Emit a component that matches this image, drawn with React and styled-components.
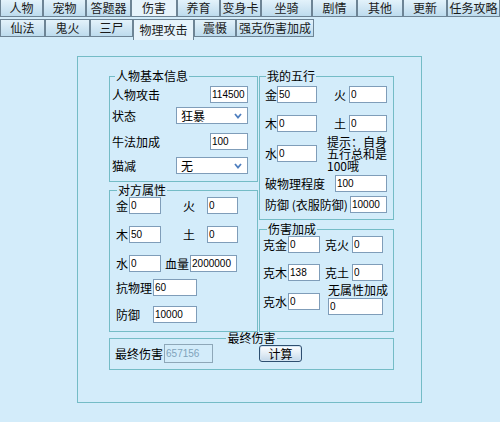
import React from 'react';
import styled, { createGlobalStyle } from 'styled-components';

const BG = '#d3ecfa';
const LINE = '#74bcc6';

const GlobalStyle = createGlobalStyle`
  html, body {
    margin: 0;
    padding: 0;
    background: ${BG};
  }
  body {
    font-family: "Noto Sans CJK SC", "Noto Sans", sans-serif;
    font-size: 12px;
    color: #000;
  }
`;

const Page = styled.div`
  width: 500px;
  height: 422px;
  overflow: hidden;
  background: ${BG};
`;

const TabRow = styled.div`
  display: flex;
  align-items: flex-start;
  height: ${({ $h }) => $h}px;
  margin-top: ${({ $mt }) => $mt || 0}px;
`;

const Tab = styled.div`
  box-sizing: border-box;
  flex-shrink: 0;
  width: ${({ $w }) => $w}px;
  height: ${({ $h, $active, $lift }) => $h + ($active && $lift ? 3 : 0)}px;
  border: 1px solid #6d8495;
  border-top: ${({ $flat }) => ($flat ? 'none' : '1px solid #6d8495')};
  border-bottom: ${({ $active, $lift }) => ($active && $lift ? 'none' : '1px solid #6d8495')};
  background: ${({ $active }) => ($active ? '#e6f3fb' : 'linear-gradient(#e3f2fb, #bddbed)')};
  display: flex;
  align-items: center;
  justify-content: center;
  font-size: 12px;
  line-height: 14px;
  white-space: nowrap;
  overflow: hidden;
  color: #1a1a1a;
`;

const Panel = styled.div`
  box-sizing: border-box;
  width: 345px;
  height: 347px;
  margin: 19px 0 0 77px;
  border: 1px solid ${LINE};
  padding: 19px 0 0 31px;
`;

const Columns = styled.div`
  display: grid;
  grid-template-columns: 149px 135px;
  column-gap: 1px;
`;

const Column = styled.div`
  display: flex;
  flex-direction: column;
  gap: ${({ $gap }) => $gap}px;
`;

const Group = styled.div`
  box-sizing: border-box;
  width: ${({ $w }) => ($w ? `${$w}px` : 'auto')};
  height: ${({ $h }) => $h}px;
  margin-top: ${({ $mt }) => $mt || 0}px;
  border: 1px solid ${LINE};
`;

const Caption = styled.div`
  width: fit-content;
  margin: ${({ $ml }) => ($ml === undefined ? '-8px auto 0' : `-8px 0 0 ${$ml}px`)};
  padding: 0 1px;
  line-height: 14px;
  font-size: 12px;
  background: ${BG};
`;

const Row = styled.div`
  display: flex;
  align-items: ${({ $align }) => $align || 'center'};
  justify-content: ${({ $spread }) => ($spread ? 'space-between' : 'flex-start')};
  gap: ${({ $gap }) => $gap || 0}px;
  height: ${({ $h }) => $h || 17}px;
  margin-top: ${({ $mt }) => $mt || 0}px;
  padding: ${({ $pad }) => $pad || '0'};
`;

const Pair = styled.div`
  display: flex;
  align-items: center;
  gap: ${({ $gap }) => $gap || 0}px;
  margin-bottom: ${({ $mb }) => $mb || 0}px;
`;

const Stack = styled.div`
  display: flex;
  flex-direction: column;
  gap: 1px;
`;

const Label = styled.span`
  flex-shrink: 0;
  width: ${({ $w }) => ($w ? `${$w}px` : 'auto')};
  line-height: 14px;
  font-size: 12px;
  white-space: nowrap;
`;

const Field = styled.input.attrs({ readOnly: true })`
  box-sizing: border-box;
  flex-shrink: 0;
  width: ${({ $w }) => $w}px;
  height: ${({ $h }) => $h || 17}px;
  margin: 0;
  padding: 0 1px;
  border: 1px solid ${({ $off }) => ($off ? '#8ea7b8' : '#7f9db9')};
  background: ${({ $off }) => ($off ? BG : '#fff')};
  color: ${({ $off }) => ($off ? '#7fa3bb' : '#000')};
  font: 10px "Liberation Sans", Arial, sans-serif;
  outline: none;
`;

const SelectBox = styled.div`
  box-sizing: border-box;
  width: ${({ $w }) => $w}px;
  height: 17px;
  border: 1px solid #7f9db9;
  background: #fff;
  display: flex;
  align-items: center;
  justify-content: space-between;
  padding: 0 5px 0 4px;
  font-size: 12px;
  line-height: 14px;
`;

const Tip = styled.div`
  flex-shrink: 0;
  width: 60px;
  font-size: 12px;
  line-height: 12px;
`;

const CalcButton = styled.button`
  box-sizing: border-box;
  width: 43px;
  height: 17px;
  padding: 0;
  border: 1px solid #2e4f70;
  border-radius: 3px;
  background: linear-gradient(#ffffff, #dde9f3 60%, #c3d8ea);
  box-shadow: inset 0 0 0 1px #d4e5f2;
  font: 12px "Noto Sans CJK SC", sans-serif;
  color: #000;
  display: flex;
  align-items: center;
  justify-content: center;
`;

const topTabs = [
  ['人物', 43], ['宠物', 43], ['答题器', 45], ['伤害', 46], ['养育', 43], ['变身卡', 41],
  ['坐骑', 51], ['剧情', 45], ['其他', 46], ['更新', 44], ['任务攻略', 53],
];

const subTabs = [
  ['仙法', 45], ['鬼火', 45], ['三尸', 43], ['物理攻击', 61], ['震慑', 42], ['强克伤害加成', 78],
];

const Chevron = () => (
  <svg width="8" height="6" viewBox="0 0 8 6">
    <polyline points="1,1 4,4.5 7,1" fill="none" stroke="#4f7fbf" strokeWidth="1.8" />
  </svg>
);

const Select = ({ value, w }) => (
  <SelectBox $w={w}>
    <span>{value}</span>
    <Chevron />
  </SelectBox>
);

export default function App() {
  return (
    <Page>
      <GlobalStyle />
      <TabRow $h={17}>
        {topTabs.map(([name, w]) => (
          <Tab key={name} $w={w} $h={17} $flat $active={name === '伤害'}>
            {name}
          </Tab>
        ))}
      </TabRow>
      <TabRow $h={18} $mt={2}>
        {subTabs.map(([name, w]) => (
          <Tab key={name} $w={w} $h={18} $lift $active={name === '物理攻击'}>
            {name}
          </Tab>
        ))}
      </TabRow>

      <Panel>
        <Columns>
          <Column $gap={8}>
            <Group $h={106}>
              <Caption $ml={5}>人物基本信息</Caption>
              <Row $spread $pad="0 9px 0 2px" $mt={3}>
                <Label>人物攻击</Label>
                <Field $w={38} value="114500" />
              </Row>
              <Row $spread $pad="0 9px 0 2px" $mt={4}>
                <Label>状态</Label>
                <Select w={72} value="狂暴" />
              </Row>
              <Row $spread $pad="0 9px 0 2px" $mt={9}>
                <Label>牛法加成</Label>
                <Field $w={38} value="100" />
              </Row>
              <Row $spread $pad="0 9px 0 2px" $mt={7}>
                <Label>猫减</Label>
                <Select w={72} value="无" />
              </Row>
            </Group>

            <Group $h={142}>
              <Caption $ml={7}>对方属性</Caption>
              <Row $pad="0 0 0 6px" $gap={22}>
                <Pair $gap={1}>
                  <Label>金</Label>
                  <Field $w={32} value="0" />
                </Pair>
                <Pair $gap={12}>
                  <Label>火</Label>
                  <Field $w={31} value="0" />
                </Pair>
              </Row>
              <Row $pad="0 0 0 6px" $gap={22} $mt={12}>
                <Pair $gap={1}>
                  <Label>木</Label>
                  <Field $w={32} value="50" />
                </Pair>
                <Pair $gap={12}>
                  <Label>土</Label>
                  <Field $w={31} value="0" />
                </Pair>
              </Row>
              <Row $pad="0 0 0 6px" $gap={4} $mt={12}>
                <Pair $gap={1}>
                  <Label>水</Label>
                  <Field $w={32} value="0" />
                </Pair>
                <Pair $gap={1}>
                  <Label>血量</Label>
                  <Field $w={47} value="2000000" />
                </Pair>
              </Row>
              <Row $pad="0 0 0 6px" $mt={7}>
                <Label $w={37}>抗物理</Label>
                <Field $w={44} value="60" />
              </Row>
              <Row $pad="0 0 0 6px" $mt={10}>
                <Label $w={37}>防御</Label>
                <Field $w={44} value="10000" />
              </Row>
            </Group>
          </Column>

          <Column $gap={9}>
            <Group $h={144}>
              <Caption $ml={6}>我的五行</Caption>
              <Row $pad="0 0 0 5px" $gap={17} $mt={3}>
                <Pair>
                  <Label>金</Label>
                  <Field $w={40} value="50" />
                </Pair>
                <Pair $gap={3}>
                  <Label>火</Label>
                  <Field $w={38} value="0" />
                </Pair>
              </Row>
              <Row $pad="0 0 0 5px" $gap={17} $mt={12}>
                <Pair>
                  <Label>木</Label>
                  <Field $w={40} value="0" />
                </Pair>
                <Pair $gap={3}>
                  <Label>土</Label>
                  <Field $w={38} value="0" />
                </Pair>
              </Row>
              <Row $pad="0 0 0 5px" $gap={10} $mt={13}>
                <Pair>
                  <Label>水</Label>
                  <Field $w={40} value="0" />
                </Pair>
                <Tip>提示：自身五行总和是100哦</Tip>
              </Row>
              <Row $pad="0 0 0 5px" $mt={13}>
                <Label $w={70}>破物理程度</Label>
                <Field $w={52} value="100" />
              </Row>
              <Row $pad="0 0 0 5px" $mt={4}>
                <Label $w={85}>防御 (衣服防御)</Label>
                <Field $w={37} value="10000" />
              </Row>
            </Group>

            <Group $h={103}>
              <Caption $ml={7}>伤害加成</Caption>
              <Row $pad="0 0 0 3px" $gap={5}>
                <Pair $gap={1}>
                  <Label>克金</Label>
                  <Field $w={32} value="0" />
                </Pair>
                <Pair $gap={3}>
                  <Label>克火</Label>
                  <Field $w={31} value="0" />
                </Pair>
              </Row>
              <Row $pad="0 0 0 3px" $gap={5} $mt={11}>
                <Pair $gap={1}>
                  <Label>克木</Label>
                  <Field $w={32} value="138" />
                </Pair>
                <Pair $gap={3}>
                  <Label>克土</Label>
                  <Field $w={31} value="0" />
                </Pair>
              </Row>
              <Row $pad="0 0 0 3px" $gap={8} $mt={2} $h={32} $align="flex-end">
                <Pair $gap={1} $mb={5}>
                  <Label>克水</Label>
                  <Field $w={32} value="0" />
                </Pair>
                <Stack>
                  <Label>无属性加成</Label>
                  <Field $w={55} value="0" />
                </Stack>
              </Row>
            </Group>
          </Column>
        </Columns>

        <Group $w={285} $h={32} $mt={6}>
          <Caption>最终伤害</Caption>
          <Row $pad="0 0 0 5px" $h={19} $mt={-1} $gap={46}>
            <Pair $gap={1}>
              <Label>最终伤害</Label>
              <Field $w={49} $h={19} $off value="657156" />
            </Pair>
            <CalcButton type="button">计算</CalcButton>
          </Row>
        </Group>
      </Panel>
    </Page>
  );
}
